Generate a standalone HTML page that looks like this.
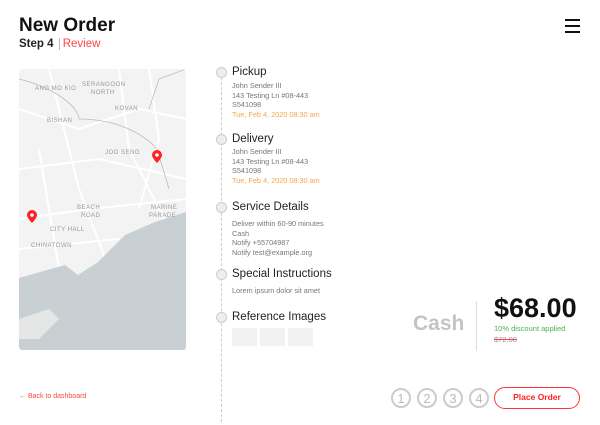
<!DOCTYPE html>
<html><head><meta charset="utf-8"><style>
*{margin:0;padding:0;box-sizing:border-box}
body{width:600px;height:425px;background:#fff;font-family:"Liberation Sans",sans-serif;position:relative;overflow:hidden;color:#222}
.a{position:absolute}
h1{position:absolute;left:19px;top:15px;font-size:19px;font-weight:bold;color:#111}
.step{left:19px;top:38px;font-size:11.5px;font-weight:bold}
.step span{color:#f44;font-weight:normal;border-left:1px solid #bbb;padding-left:3px;margin-left:2px}
.ham{left:565px;width:15px;height:2.2px;background:#111}
.tl{left:221px;top:72px;width:0;height:350px;border-left:1px dashed #ccc}
.dot{left:216px;width:11px;height:11px;border-radius:50%;background:#eee;border:1px solid #ccc}
.t{left:232px;font-size:11.5px;color:#222}
.d{left:232px;font-size:7.3px;color:#777;line-height:9.6px}
.d .o{color:#f5a54a}
.img{top:328px;width:25px;height:18px;background:#f2f2f2}
.c{top:388px;width:20px;height:20px;border:2px solid #ccc;border-radius:50%;color:#bbb;font-size:13px;text-align:center;line-height:17px}
</style></head><body>
<h1>New Order</h1>
<div class="a step">Step 4 <span>Review</span></div>
<div class="a ham" style="top:19px"></div><div class="a ham" style="top:25px"></div><div class="a ham" style="top:31px"></div>

<svg class="a" style="left:19px;top:69px;border-radius:3px" width="167" height="281" viewBox="0 0 167 281">
<rect width="167" height="281" fill="#f3f3f3"/>
<g stroke="#fff" stroke-width="2" fill="none">
<path d="M0 40 L60 60 L120 40 L167 50"/><path d="M0 100 L80 90 L167 110"/><path d="M30 0 L60 120 L90 200"/><path d="M100 0 L110 80 L150 160"/><path d="M0 150 L70 140 L167 130"/><path d="M0 180 L100 170"/><path d="M20 80 L40 200"/><path d="M130 0 L140 70 L120 140"/>
</g>
<g stroke="#bbb" stroke-width="0.8" fill="none"><path d="M0 10 C40 20 60 40 60 50 C90 50 120 60 138 80 L150 120"/><path d="M130 40 L140 10 L167 0"/></g>
<path d="M0 209 L46 196 L59 206 L79 193 L106 166 L136 153 L167 143 L167 281 L0 281Z" fill="#c9d0d3"/>
<path d="M0 250 L30 240 L40 250 L20 270 L0 270Z" fill="#e5e6e6"/>
<g font-size="6" fill="#999" letter-spacing="0.5" font-family="Liberation Sans"><text x="16" y="21">ANG MO KIO</text><text x="63" y="17">SERANGOON</text><text x="72" y="25">NORTH</text><text x="96" y="41">KOVAN</text><text x="28" y="53">BISHAN</text><text x="86" y="85">JOO SENG</text><text x="132" y="140">MARINE</text><text x="130" y="148">PARADE</text><text x="58" y="140">BEACH</text><text x="62" y="148">ROAD</text><text x="31" y="162">CITY HALL</text><text x="12" y="178">CHINATOWN</text></g>
<g fill="#f22"><path d="M138 81 a5 5 0 0 1 5 5 c0 3 -5 8 -5 8 c0 0 -5 -5 -5 -8 a5 5 0 0 1 5 -5z"/><path d="M13 141 a5 5 0 0 1 5 5 c0 3 -5 8 -5 8 c0 0 -5 -5 -5 -8 a5 5 0 0 1 5 -5z"/></g>
<circle cx="138" cy="86" r="1.8" fill="#fff"/><circle cx="13" cy="146" r="1.8" fill="#fff"/>
</svg>

<div class="a tl"></div>
<div class="a dot" style="top:67px"></div><div class="a t" style="top:66px">Pickup</div>
<div class="a d" style="top:81px">John Sender III<br>143 Testing Ln #08-443<br>S541098<br><span class="o">Tue, Feb 4, 2020 08:30 am</span></div>
<div class="a dot" style="top:134px"></div><div class="a t" style="top:133px">Delivery</div>
<div class="a d" style="top:147px">John Sender III<br>143 Testing Ln #08-443<br>S541098<br><span class="o">Tue, Feb 4, 2020 08:30 am</span></div>
<div class="a dot" style="top:202px"></div><div class="a t" style="top:201px">Service Details</div>
<div class="a d" style="top:219px">Deliver within 60-90 minutes<br>Cash<br>Notify +55704987<br>Notify test@example.org</div>
<div class="a dot" style="top:269px"></div><div class="a t" style="top:268px">Special Instructions</div>
<div class="a d" style="top:286px">Lorem ipsum dolor sit amet</div>
<div class="a dot" style="top:312px"></div><div class="a t" style="top:311px">Reference Images</div>
<div class="a img" style="left:232px"></div><div class="a img" style="left:260px"></div><div class="a img" style="left:288px"></div>

<div class="a" style="left:413px;top:312px;font-size:21px;font-weight:bold;color:#c4c4c4">Cash</div>
<div class="a" style="left:476px;top:301px;width:1px;height:50px;background:#ddd"></div>
<div class="a" style="left:494px;top:293px;font-size:27px;font-weight:bold;color:#111">$68.00</div>
<div class="a" style="left:494px;top:324px;font-size:7.5px;color:#4caf50">10% discount applied</div>
<div class="a" style="left:494px;top:335px;font-size:7.5px;color:#999;text-decoration:line-through;text-decoration-color:#f44">$72.00</div>

<div class="a" style="left:19px;top:393px;font-size:7px;color:#f44">← Back to dashboard</div>
<div class="a c" style="left:391px">1</div><div class="a c" style="left:417px">2</div><div class="a c" style="left:443px">3</div><div class="a c" style="left:469px">4</div>
<div class="a" style="left:494px;top:387px;width:86px;height:22px;border:1.5px solid #f33;border-radius:11px;color:#f22;font-size:8.5px;font-weight:bold;text-align:center;line-height:19px">Place Order</div>
</body></html>
